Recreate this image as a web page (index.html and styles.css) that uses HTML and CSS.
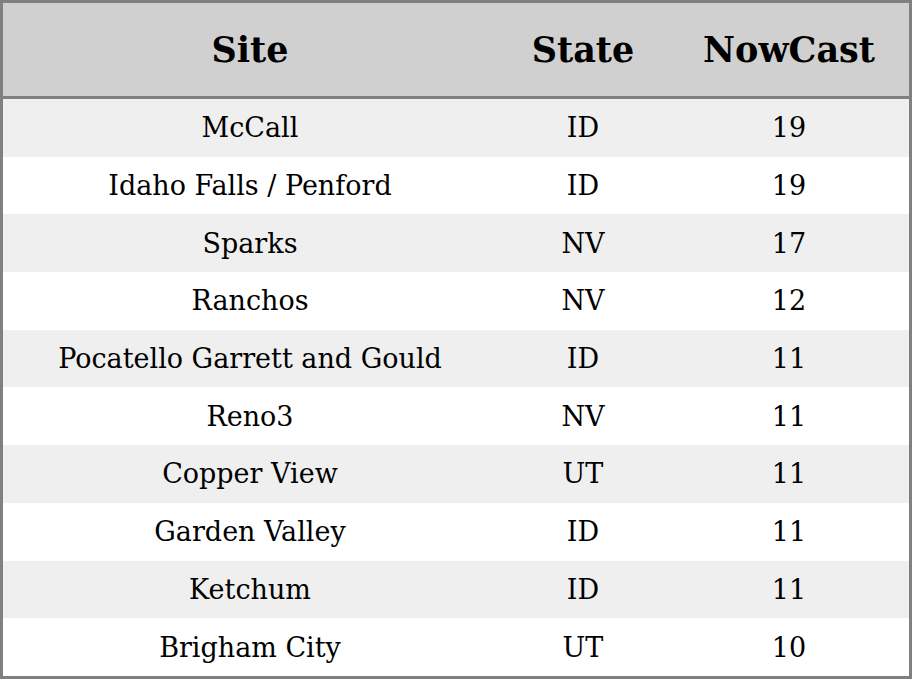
FILE: index.html
```html
<!DOCTYPE html>
<html>
<head>
<meta charset="utf-8">
<link rel="stylesheet" href="styles.css">
</head>
<body>
<table class="aq">
  <thead>
    <tr><th class="c-site">Site</th><th class="c-state">State</th><th class="c-now">NowCast</th></tr>
  </thead>
  <tbody>
    <tr><td>McCall</td><td>ID</td><td>19</td></tr>
    <tr><td>Idaho Falls / Penford</td><td>ID</td><td>19</td></tr>
    <tr><td>Sparks</td><td>NV</td><td>17</td></tr>
    <tr><td>Ranchos</td><td>NV</td><td>12</td></tr>
    <tr><td>Pocatello Garrett and Gould</td><td>ID</td><td>11</td></tr>
    <tr><td>Reno3</td><td>NV</td><td>11</td></tr>
    <tr><td>Copper View</td><td>UT</td><td>11</td></tr>
    <tr><td>Garden Valley</td><td>ID</td><td>11</td></tr>
    <tr><td>Ketchum</td><td>ID</td><td>11</td></tr>
    <tr><td>Brigham City</td><td>UT</td><td>10</td></tr>
  </tbody>
</table>
</body>
</html>
```
FILE: styles.css
```css
html, body {
  margin: 0;
  padding: 0;
  background: #ffffff;
}
.aq {
  width: 912px;
  border-collapse: collapse;
  border: 3px solid #808080;
  font-family: "DejaVu Serif", serif;
  color: #000;
  table-layout: fixed;
}
.aq th {
  background: #d0d0d0;
  font-size: 35px;
  font-weight: bold;
  height: 93px;
  padding: 0;
  text-align: center;
  border-bottom: 3px solid #808080;
}
.c-site { width: 494px; }
.c-state { width: 172px; }
.c-now { width: 240px; }
.aq td {
  font-size: 27px;
  height: 57.7px;
  padding: 0;
  text-align: center;
}
.aq tbody tr:nth-child(odd) td { background: #efefef; }
.aq tbody tr:nth-child(even) td { background: #ffffff; }
```
